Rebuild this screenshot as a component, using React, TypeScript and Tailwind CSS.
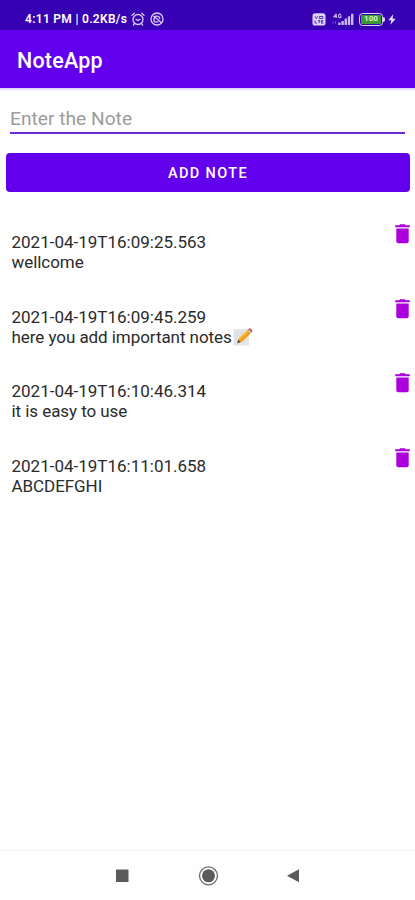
import { useState } from "react";

const notes = [
  { date: "2021-04-19T16:09:25.563", text: "wellcome", pencil: false },
  { date: "2021-04-19T16:09:45.259", text: "here you add important notes", pencil: true },
  { date: "2021-04-19T16:10:46.314", text: "it is easy to use", pencil: false },
  { date: "2021-04-19T16:11:01.658", text: "ABCDEFGHI", pencil: false },
];

function AlarmIcon() {
  return (
    <svg width="14" height="14" viewBox="0 0 14 14" fill="none" stroke="#d9ccf5" strokeWidth="1.3" strokeLinecap="round">
      <circle cx="7" cy="7.5" r="5" />
      <path d="M1 3.2 3.2 1.2M13 3.2 10.8 1.2M3.4 11.6 2.4 13M10.6 11.6 11.6 13" />
      <path d="M5 7.3l1.8 1.2L9 7.3" />
    </svg>
  );
}

function DialIcon() {
  return (
    <svg width="14" height="14" viewBox="0 0 14 14" fill="none" stroke="#d9ccf5" strokeWidth="1.3">
      <circle cx="7" cy="7" r="6" />
      <path d="M4 9.8V7.2A3 3 0 0 1 9.6 5.6V7" />
      <path d="M3.6 4 11.2 10.6M4 9.8h4.4" />
    </svg>
  );
}

function VolteIcon() {
  return (
    <svg width="14" height="13" viewBox="0 0 14 13" fill="none">
      <rect x=".5" y=".3" width="13" height="12.2" rx="2.6" fill="#ddd1f8" />
      <path d="M3 3.2 4.3 5.6 5.6 3.2M7.4 3.5h3.4v2H7.4zM3 7.5v2.6h2M6 7.6h2.4M7.2 7.6v2.6M11.4 7.6H9.5v2.6h1.9M9.5 8.9h1.6" stroke="#4a22b4" strokeWidth=".9" />
    </svg>
  );
}

function SignalIcon() {
  return (
    <svg width="22" height="13" viewBox="0 0 22 13" fill="#c9b8f2">
      <path d="M4.2.8 2 3.6h3M4.2.8V5M9 1.5C8 .7 6.5 1.2 6.5 3S8 5.2 9 4.2V3H8" fill="none" stroke="#c9b8f2" strokeWidth="1.1" />
      <path d="M.5 8h1v3h-1zM3 8h1v3H3z" opacity=".35" />
      <rect x="6.2" y="9.5" width="2.4" height="2.5" rx=".5" />
      <rect x="9.4" y="8" width="2.4" height="4" rx=".5" />
      <rect x="12.6" y="5.6" width="2.4" height="6.4" rx=".5" />
      <rect x="15.8" y="3.2" width="2.4" height="8.8" rx=".5" />
      <rect x="19" y=".8" width="2.4" height="11.2" rx=".5" />
    </svg>
  );
}

function BatteryIcon() {
  return (
    <div className="flex h-[13px] w-[26px] items-center">
      <div className="flex h-[13px] w-6 items-center justify-center rounded-[3.5px] border-[1.5px] border-[#ddd1f8] p-px">
        <div className="flex h-full w-full items-center justify-center rounded-[1px] bg-[#3b9a35] text-[8px] leading-none font-bold text-[#d5f5c8]">
          100
        </div>
      </div>
      <div className="h-[5px] w-0.5 rounded-r-sm bg-[#ddd1f8]" />
    </div>
  );
}

function StatusBar() {
  return (
    <div className="flex h-[30px] shrink-0 items-center bg-[#3700b3] pt-2 pr-[19px] pl-[25px] text-white">
      <span className="w-[106px] text-[12px] font-semibold tracking-[0.3px] whitespace-nowrap">4:11 PM | 0.2KB/s</span>
      <AlarmIcon />
      <span className="ml-[5px]">
        <DialIcon />
      </span>
      <div className="ml-auto flex items-center">
        <VolteIcon />
        <span className="ml-1.5">
          <SignalIcon />
        </span>
        <span className="ml-[5px]">
          <BatteryIcon />
        </span>
        <svg className="ml-[3px]" width="8" height="11" viewBox="0 0 8 11" fill="#e6dcfa">
          <path d="M5.2.3.3 6.3h3L2.4 10.7 7.7 4.7H4.6z" />
        </svg>
      </div>
    </div>
  );
}

function TrashIcon() {
  return (
    <svg width="15" height="20" viewBox="0 0 15 20" fill="#ab00dc">
      <path d="M.2 1.2h4L5.2.2h4.600l1 1h4v2H.2z" />
      <path d="M1.300 4.600h12.400v12.600a2 2 0 0 1-2 2H3.300a2 2 0 0 1-2-2z" />
    </svg>
  );
}

function PencilNote() {
  return (
    <svg className="ml-px" width="20" height="18" viewBox="0 0 20 18">
      <rect x=".5" y="1" width="15.5" height="16.5" rx="1" fill="#e3e4e7" />
      <path d="M3 5h7M3 8h5M3 11h3" stroke="#d3d4d8" strokeWidth=".8" />
      <path d="M4.2 15.2 5.6 10.8 14 2.4 17.4 5.6 8.8 13.8z" fill="#fbb41a" />
      <path d="M7.2 12.3 15.8 4 17.4 5.600 8.800 13.800z" fill="#f09a1c" />
      <path d="M4.200 15.200 5.300 11.700 7.800 14.100z" fill="#4b4540" />
      <path d="m14 2.400 1.100-1.100 3.400 3.200-1.100 1.100z" fill="#a9bac7" />
      <path d="m15.100 1.300.8-.8q1-.7 2.300.5t1.100 2.700l-.8.800z" fill="#e35564" />
    </svg>
  );
}

export default function App() {
  const [note, setNote] = useState("");

  return (
    <div className="flex h-[900px] w-full flex-col overflow-hidden bg-[#fefefe] font-[Roboto,sans-serif]">
      <StatusBar />
      <header className="flex h-[58px] shrink-0 items-center bg-[#6200ee] pt-1 pl-[17px]">
        <h1 className="text-[21.5px] font-medium tracking-[0.2px] text-white">NoteApp</h1>
      </header>

      <div className="h-[3px] shrink-0 bg-gradient-to-b from-[#d9c8f7] to-[#fefefe]" />

      <div className="px-[10px] pt-3.5">
        <input
          value={note}
          onChange={(e) => setNote(e.target.value)}
          placeholder="Enter the Note"
          className="block h-[29px] w-full border-b-2 border-[#6a2bd3] text-[19.2px] text-black outline-none placeholder:text-[#9b9b9b]"
        />
      </div>

      <div className="pt-[19px] pr-[5px] pl-1.5">
        <button className="block h-[39px] w-full rounded-[4px] bg-[#6200ee] pt-[3px] text-[14.5px] font-medium tracking-[1.35px] text-white">
          ADD NOTE
        </button>
      </div>

      <ul className="pt-8">
        {notes.map((n) => (
          <li key={n.date} className="flex h-[74.7px] justify-between pr-[5px] pl-[11.5px] text-[#2b2b2b]">
            <div className="pt-2 text-[17px] leading-5">
              <p>{n.date}</p>
              <p className="flex items-center tracking-[-0.06px]">
                {n.text}
                {n.pencil && <PencilNote />}
              </p>
            </div>
            <button className="self-start">
              <TrashIcon />
            </button>
          </li>
        ))}
      </ul>

      <nav className="mt-auto flex h-[50px] shrink-0 items-center justify-center border-t border-[#f3f3f3]">
        <svg width="190" height="22" viewBox="0 0 190 22" fill="#5b5b5b">
          <rect x="3" y="4.5" width="12.5" height="12.5" rx=".5" />
          <circle cx="95.5" cy="10.800" r="6.500" />
          <circle cx="95.500" cy="10.800" r="9" fill="none" stroke="#6b6b6b" strokeWidth="1.300" />
          <path d="M174 10.800 186 4.300v13z" />
        </svg>
      </nav>
    </div>
  );
}
